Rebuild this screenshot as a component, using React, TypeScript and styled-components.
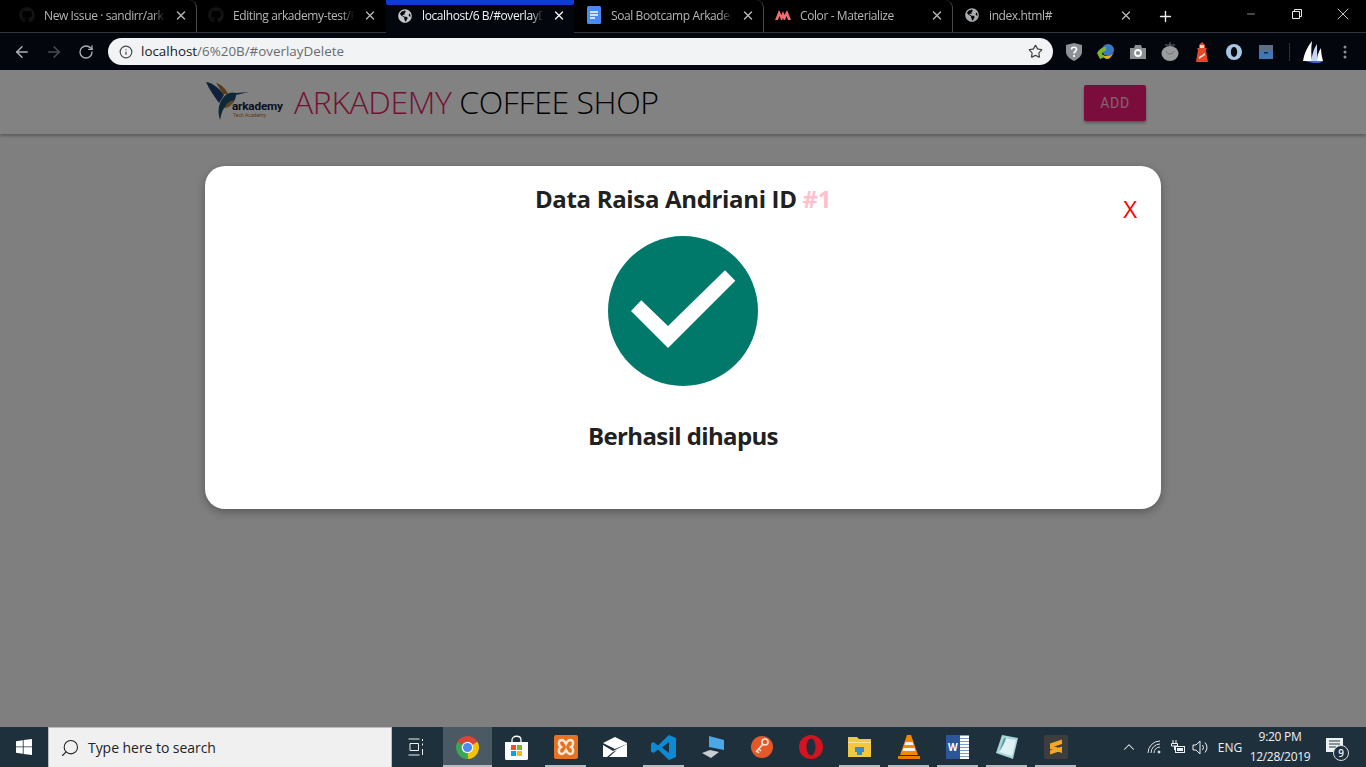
import styled, { createGlobalStyle } from "styled-components";
import { ArrowLeft, ArrowRight, ChevronUp, Info, Minus, Plus, RotateCw, Search, Star, X } from "lucide-react";
import { FaGithub, FaGlobeAmericas } from "react-icons/fa";

const UI_FONT = `"Open Sans", "Noto Sans", sans-serif`;

const GlobalStyle = createGlobalStyle`
  html, body {
    margin: 0;
    padding: 0;
    height: 767px;
    overflow: hidden;
    background: #000;
  }
  * {
    box-sizing: border-box;
  }
`;

const Screen = styled.div`
  display: flex;
  flex-direction: column;
  width: 1366px;
  height: 767px;
  font-family: ${UI_FONT};
`;

/* tab strip */

const TabStrip = styled.div`
  display: flex;
  flex: none;
  height: 33px;
  padding-left: 8px;
  background: #000;
  border-bottom: 1px solid #33363a;
`;

const Tab = styled.div<{ $active?: boolean; $divider?: boolean }>`
  position: relative;
  display: flex;
  align-items: center;
  gap: 9px;
  width: 189px;
  height: ${(p) => (p.$active ? "33px" : "32px")};
  padding: 0 8px 2px 11px;
  background: ${(p) => (p.$active ? "#03060c" : "transparent")};
  border-radius: 8px 8px 0 0;
  color: ${(p) => (p.$active ? "#f1f3f4" : "#b4b6b8")};
  border-right: 1px solid ${(p) => (p.$divider ? "#45484b" : "transparent")};
  background-clip: padding-box;

  &::before {
    content: "";
    display: ${(p) => (p.$active ? "block" : "none")};
    position: absolute;
    top: 0;
    left: 0;
    right: 0;
    height: 5px;
    border-radius: 0 0 2px 2px;
    background: #0d3bd4;
  }
`;

const TabIcon = styled.span`
  display: flex;
  flex: none;
  width: 16px;
  height: 16px;
  align-items: center;
  justify-content: center;
`;

const TabTitle = styled.span`
  flex: 1;
  min-width: 0;
  white-space: nowrap;
  font-size: 12px;
  letter-spacing: -0.4px;
  -webkit-mask-image: linear-gradient(90deg, #000 90%, transparent);
  mask-image: linear-gradient(90deg, #000 90%, transparent);
`;

const TabClose = styled.span`
  display: flex;
  flex: none;
  width: 14px;
  justify-content: center;
`;

const NewTab = styled.span`
  display: flex;
  align-items: center;
  justify-content: center;
  width: 46px;
  color: #e8eaed;
`;

const WindowControls = styled.div`
  display: flex;
  margin-left: auto;
  height: 28px;
`;

const WindowButton = styled.span`
  display: flex;
  width: 46px;
  align-items: center;
  justify-content: center;
  color: #e8e8e8;
`;

/* address bar row */

const Toolbar = styled.div`
  display: flex;
  flex: none;
  align-items: center;
  height: 37px;
  padding-left: 6px;
  background: #03060c;
`;

const NavButton = styled.span<{ $dim?: boolean }>`
  display: flex;
  width: 32px;
  justify-content: center;
  color: ${(p) => (p.$dim ? "#4b4e52" : "#aeb1b4")};
`;

const Omnibox = styled.div`
  display: flex;
  align-items: center;
  gap: 8px;
  width: 945px;
  height: 27px;
  margin-left: 6px;
  padding: 0 10px 0 11px;
  border-radius: 14px;
  background: #f1f3f4;
  color: #45484c;
`;

const Url = styled.span`
  flex: 1;
  padding-bottom: 2px;
  font-size: 13.4px;
  color: #686c70;

  b {
    font-weight: 400;
    color: #202124;
  }
`;

const Extensions = styled.div`
  display: flex;
  align-items: center;
  margin-left: 5px;
`;

const ExtensionSlot = styled.span`
  display: flex;
  width: 32px;
  justify-content: center;
`;

const ToolbarDivider = styled.span`
  width: 1px;
  height: 18px;
  margin: 0 7px;
  background: #2c2f33;
`;

/* web page */

const Page = styled.div`
  position: relative;
  flex: 1;
  min-height: 0;
  background: #fafafa;
`;

const PageHeader = styled.header`
  display: flex;
  align-items: center;
  height: 64px;
  padding: 0 220px 0 205px;
  background: #fff;
  box-shadow: 0 2px 3px rgba(0, 0, 0, 0.3);
`;

const Brand = styled.h1`
  flex: 1;
  margin: 0 0 2px 9px;
  font-size: 32px;
  font-weight: 350;
  letter-spacing: -0.42px;
  color: #000;

  span {
    color: #e91e63;
  }
`;

const AddButton = styled.button`
  width: 62px;
  height: 36px;
  margin-top: 2px;
  padding: 0;
  border: 0;
  border-radius: 2px;
  background: #f01a75;
  box-shadow: 0 2px 3px rgba(0, 0, 0, 0.35);
  color: rgba(255, 255, 255, 0.75);
  font: 400 14px "Roboto", sans-serif;
  letter-spacing: 0.7px;
`;

const Overlay = styled.div`
  position: absolute;
  inset: 0;
  padding: 96px 205px 0;
  background: rgba(0, 0, 0, 0.49);
`;

const Modal = styled.section`
  position: relative;
  display: flex;
  flex-direction: column;
  align-items: center;
  height: 343px;
  padding-top: 17px;
  border-radius: 20px;
  background: #fff;
  box-shadow: 0 3px 10px rgba(0, 0, 0, 0.3);
  color: #212121;
`;

const ModalTitle = styled.h2`
  margin: 0 0 21px;
  font-size: 24px;
  line-height: 32px;
  font-weight: 700;
  letter-spacing: -0.33px;

  span {
    color: #ffc0cb;
  }
`;

const ModalClose = styled.a`
  position: absolute;
  top: 26px;
  right: 24px;
  font-size: 24px;
  line-height: 34px;
  font-weight: 400;
  color: #f00;
`;

const ModalMessage = styled.p`
  margin: 34px 0 0;
  font-size: 24px;
  line-height: 32px;
  font-weight: 700;
  letter-spacing: -0.63px;
`;

/* windows taskbar */

const Taskbar = styled.footer`
  display: flex;
  flex: none;
  align-items: stretch;
  height: 40px;
  background: #1f303d;
  color: #eef1f3;
`;

const StartButton = styled.span`
  display: flex;
  width: 48px;
  align-items: center;
  justify-content: center;
`;

const SearchBox = styled.div`
  display: flex;
  align-items: center;
  gap: 8px;
  width: 344px;
  padding-left: 11px;
  background: #f0f0f0;
  border: 1px solid #b9bdc0;
  border-bottom: 0;
  color: #222;
  font-size: 14px;
  letter-spacing: -0.05px;
`;

const SearchGlyph = styled(Search)`
  transform: scaleX(-1);
`;

const TaskView = styled.span`
  display: flex;
  width: 51px;
  padding-right: 3px;
  align-items: center;
  justify-content: center;
`;

const TaskCell = styled.span<{ $running?: boolean; $active?: boolean }>`
  display: flex;
  width: 49px;
  align-items: center;
  justify-content: center;
  background: ${(p) => (p.$active ? "#4a5963" : "transparent")};
  box-shadow: inset 0 -2px 0 ${(p) => (p.$running ? "#b4bcc2" : "transparent")};
  background-clip: padding-box;
  border-left: 4px solid transparent;
  border-right: 4px solid transparent;
  ${(p) => p.$active && "border: 0;"}
`;

const Tray = styled.div`
  display: flex;
  align-items: center;
  margin-left: auto;
  padding-right: 9px;
`;

const TrayItem = styled.span<{ $width: number }>`
  display: flex;
  width: ${(p) => p.$width}px;
  align-items: center;
  justify-content: center;
  font-size: 12px;
`;

const Clock = styled.span`
  width: 64px;
  font-size: 12px;
  line-height: 20px;
  letter-spacing: -0.3px;
  text-align: center;
`;

const NotificationSlot = styled.span`
  position: relative;
  display: flex;
  width: 45px;
  justify-content: center;
`;

const NotificationCount = styled.span`
  position: absolute;
  top: 7px;
  left: 21px;
  width: 16px;
  height: 16px;
  border: 1px solid #d9dde0;
  border-radius: 50%;
  background: #1f303d;
  font-size: 10px;
  line-height: 14px;
  font-weight: 600;
  text-align: center;
`;

const ArkademyLogo = () => (
  <svg width="80" height="42" viewBox="0 0 80 42">
    <path d="M1 1C8 2 15 8 19 14L14 22C9 15 4 8 1 1Z" fill="#1d3f73" />
    <path d="M11 2C16 3 21 8 23 13L18 13C16 9 13 5 11 2Z" fill="#b0792f" />
    <path d="M15 22C19 13 25 10 31 12L44 11L31 14C31 21 24 26 19 27C17 30 16 34 15 39C13 33 13 27 15 22Z" fill="#1e4f6f" />
    <path d="M19 27C22 22 25 20 29 19C27 24 24 27 19 27Z" fill="#b98a3a" />
    <text x="27" y="29" fontFamily="Roboto, sans-serif" fontSize="11.8" fontWeight="700" letterSpacing="-0.2" fill="#13233f">
      arkademy
    </text>
    <text x="28" y="36" fontFamily="Roboto, sans-serif" fontSize="5" fill="#b5702a">
      Tech Academy
    </text>
  </svg>
);

const SuccessMark = () => (
  <svg width="150" height="150" viewBox="0 0 150 150">
    <circle cx="75" cy="75" r="75" fill="#00796b" />
    <path d="M23 75L33.3 64.3L60 90L117 34.3L127.3 44.7L60 112Z" fill="#fff" />
  </svg>
);

const DocsIcon = () => (
  <svg width="14" height="18" viewBox="0 0 14 18">
    <rect width="14" height="18" rx="1.5" fill="#4a8af4" />
    <path d="M3 6h8M3 9h8M3 12h5" stroke="#fff" strokeWidth="1.4" />
  </svg>
);

const MaterializeIcon = () => (
  <svg width="16" height="10" viewBox="0 0 16 10">
    <path d="M0 10L4 0L6.5 5L8 1L9.5 5L12 0L16 10H13L11.5 6L10 10H8.8L8 8L7.2 10H6L4.5 6L3 10Z" fill="#ee6e73" />
  </svg>
);

const RestoreIcon = () => (
  <svg width="10" height="10" viewBox="0 0 10 10" fill="none" stroke="currentColor">
    <path d="M.5 2.5h7v7h-7zM2.5 2.5v-2h7v7h-2" />
  </svg>
);

const ShieldExt = () => (
  <svg width="16" height="18" viewBox="0 0 16 18">
    <path d="M8 0L16 2V9C16 13 12 16 8 18C4 16 0 13 0 9V2Z" fill="#8e9195" />
    <path d="M5.5 6.5C5.5 3.5 10.5 3.5 10.5 6.5C10.5 8.5 8 8.5 8 10.5M8 12v2" stroke="#fff" strokeWidth="1.7" fill="none" />
  </svg>
);

const IdmExt = () => (
  <svg width="18" height="16" viewBox="0 0 18 16">
    <circle cx="11" cy="6" r="6" fill="#3b78c4" />
    <path d="M0 9C3 4 6 3 9 3L9 7C6 7 5 9 5 10L8 13L3 15Z" fill="#7db52c" />
    <path d="M6 11C9 13 14 12 17 9L13 14C10 16 7 15 6 11Z" fill="#e3b021" />
  </svg>
);

const CameraExt = () => (
  <svg width="16" height="14" viewBox="0 0 16 14">
    <path d="M0 3H4L5 0H11L12 3H16V14H0Z" fill="#8c8f92" />
    <circle cx="8" cy="8" r="3" fill="none" stroke="#fff" strokeWidth="1.8" />
  </svg>
);

const TomatoExt = () => (
  <svg width="18" height="19" viewBox="0 0 18 19">
    <path d="M9 0V5M4 3L14 3" stroke="#66696c" />
    <ellipse cx="9" cy="11.5" rx="8.5" ry="7.5" fill="#999b9d" />
    <path d="M5 9C7 13 11 13 13 9" stroke="#6f7174" fill="none" />
  </svg>
);

const LighthouseExt = () => (
  <svg width="12" height="20" viewBox="0 0 12 20">
    <path d="M3 6V3L6 0L9 3V6H11L10 8L12 20H0L2 8L1 6Z" fill="#e2492a" />
    <rect x="4" y="3" width="4" height="3" fill="#f3d5b5" />
    <path d="M3 15L9 11V13L3 17Z" fill="#f6e6d8" />
  </svg>
);

const RingExt = () => (
  <svg width="16" height="16" viewBox="0 0 16 16">
    <circle cx="8" cy="8" r="8" fill="#a6c6e3" />
    <ellipse cx="8" cy="8" rx="3.2" ry="5" fill="#04070d" />
  </svg>
);

const BoxExt = () => (
  <svg width="14" height="14" viewBox="0 0 14 14">
    <rect width="14" height="14" fill="#3f78b5" />
    <rect width="14" height="6" fill="#5c6f86" />
    <rect x="5" y="7" width="4" height="1.5" fill="#1a2a3f" />
  </svg>
);

const SailsExt = () => (
  <svg width="20" height="22" viewBox="0 0 20 22">
    <path d="M0 20C1 13 4 6 9 0C8 7 8 14 9 20Z" fill="#fff" />
    <path d="M8 21C9 14 11 7 14 3C14 9 14 15 15 21Z" fill="#c6d5f2" />
    <path d="M14 20C14 15 16 10 18 7C18 12 19 16 20 20Z" fill="#fff" />
    <path d="M2 20L10 22H17L20 20Z" fill="#3d63c9" />
  </svg>
);

const WindowsLogo = () => (
  <svg width="16" height="16" viewBox="0 0 16 16" fill="#fff">
    <path d="M0 2.2L6.8 1.2V7.5H0ZM7.6 1.1L16 0V7.5H7.6ZM0 8.3H6.8V14.7L0 13.8ZM7.6 8.3H16V16L7.6 14.9Z" />
  </svg>
);

const TaskViewIcon = () => (
  <svg width="16" height="18" viewBox="0 0 16 18" fill="none" stroke="#eef1f3">
    <path d="M.5 1h11M2 5.5h8.5v7H2zM.5 17h11" />
    <path d="M14.5 1v2M14.5 5.5v2M14.5 11v6" />
  </svg>
);

const ChromeIcon = () => (
  <svg width="23" height="23" viewBox="2 2 20 20">
    <path d="M12 12L3.34 7A10 10 0 0 1 20.66 7Z" fill="#db4437" />
    <path d="M12 12L20.66 7A10 10 0 0 1 12 22Z" fill="#f4c20d" />
    <path d="M12 12L12 22A10 10 0 0 1 3.34 7Z" fill="#3aa757" />
    <circle cx="12" cy="12" r="5" fill="#fff" />
    <circle cx="12" cy="12" r="4" fill="#4c8bf5" />
  </svg>
);

const StoreIcon = () => (
  <svg width="23" height="25" viewBox="0 0 23 25">
    <path d="M7 8V5C7 0 16 0 16 5V8" fill="none" stroke="#fff" strokeWidth="1.3" />
    <path d="M0 7H23V23.5Q23 25 21.5 25H1.5Q0 25 0 23.5Z" fill="#fff" />
    <rect x="6" y="10" width="5" height="5" fill="#f25022" />
    <rect x="12" y="10" width="5" height="5" fill="#7fba00" />
    <rect x="6" y="16" width="5" height="5" fill="#00a4ef" />
    <rect x="12" y="16" width="5" height="5" fill="#ffb900" />
  </svg>
);

const XamppIcon = () => (
  <svg width="24" height="24" viewBox="0 0 24 24">
    <rect width="24" height="24" rx="2" fill="#e8721f" />
    <path d="M8 5C4 5 4 10 7 12C4 14 4 19 8 19C10 19 11 17 12 15C13 17 14 19 16 19C20 19 20 14 17 12C20 10 20 5 16 5C14 5 13 7 12 9C11 7 10 5 8 5Z" fill="none" stroke="#fbe7d8" strokeWidth="2.4" />
  </svg>
);

const MailIcon = () => (
  <svg width="24" height="20" viewBox="0 0 24 20">
    <path d="M0 6L12 0L24 6V7L12 12L0 6Z" fill="#fff" />
    <path d="M0 8L10 14L24 7V20H6L14 13L10 15L4 20H0Z" fill="#fff" />
  </svg>
);

const VsCodeIcon = () => (
  <svg width="25" height="25" viewBox="0 0 25 25">
    <path d="M18 0L25 3V22L18 25L7 14.5L2.5 18L0 16.5V8.5L2.5 7L7 10.5ZM18 7L11 12.5L18 18Z" fill="#0e8ad4" fillRule="evenodd" />
  </svg>
);

const LaptopIcon = () => (
  <svg width="24" height="23" viewBox="0 0 24 23">
    <path d="M8 0L23 4V14L8 11Z" fill="#4aa8e8" />
    <path d="M1 17L9 14L18 16L10 22Z" fill="#c9ced2" />
  </svg>
);

const KeyAppIcon = () => (
  <svg width="24" height="24" viewBox="0 0 24 24">
    <circle cx="12" cy="12" r="11" fill="#e4582a" />
    <circle cx="15" cy="7" r="3" fill="none" stroke="#f6e3d7" strokeWidth="1.6" />
    <path d="M13 9L6 17M9 14L11 16M7 16L9 18" stroke="#f6e3d7" strokeWidth="1.6" />
  </svg>
);

const OperaIcon = () => (
  <svg width="24" height="24" viewBox="0 0 24 24">
    <circle cx="12" cy="12" r="12" fill="#d3131f" />
    <ellipse cx="12" cy="12" rx="4.5" ry="8.5" fill="#1f303d" />
  </svg>
);

const FolderIcon = () => (
  <svg width="23" height="20" viewBox="0 0 23 20">
    <path d="M0 0H9L11 2H23V20H0Z" fill="#f4c645" />
    <path d="M0 5H23V6H0Z" fill="#fbe59a" />
    <path d="M7 10H16V15H14V18H9V15H7Z" fill="#2f8fce" />
  </svg>
);

const VlcIcon = () => (
  <svg width="22" height="24" viewBox="0 0 22 24">
    <path d="M9 0H13L20 20H2Z" fill="#f08a00" />
    <path d="M7.5 7H14.5L15.5 10H6.5ZM5.5 13H16.5L17.5 16H4.5Z" fill="#f5f5f5" />
    <path d="M0 21H22V24H0Z" fill="#e87d00" />
  </svg>
);

const WordTile = styled.span`
  display: flex;
  width: 23px;
  height: 24px;
  align-items: center;
  padding-left: 2px;
  background: linear-gradient(90deg, #2b579a 62%, transparent 62%),
    repeating-linear-gradient(0deg, #fff 0 2px, #7f9cc9 2px 3px);
  color: #fff;
  font-size: 10px;
  font-weight: 700;
`;

const NotepadIcon = () => (
  <svg width="22" height="24" viewBox="0 0 22 24">
    <path d="M6 0L22 3L17 24L0 18Z" fill="#a9d4d8" />
    <path d="M8 3L20 5L16 21L3 17Z" fill="#dff1f2" />
    <path d="M3 17C6 12 9 8 10 3L8 3Z" fill="#4f98a6" />
  </svg>
);

const SublimeIcon = () => (
  <svg width="24" height="24" viewBox="0 0 24 24">
    <rect width="24" height="24" rx="2" fill="#3d3d3d" />
    <path d="M6 8.5L18 4.5V9L6 13ZM6 10L18 14V18L6 14ZM6 15.5L18 11.5V15.5L6 19.5Z" fill="#f5a623" />
  </svg>
);

const WifiIcon = () => (
  <svg width="14" height="14" viewBox="0 0 14 14" fill="none" stroke="#dfe3e6">
    <path d="M1 13A12 12 0 0 1 13 1M4 13A9 9 0 0 1 13 4M7 13A6 6 0 0 1 13 7" />
    <circle cx="12" cy="12" r="1" fill="#dfe3e6" />
  </svg>
);

const BatteryIcon = () => (
  <svg width="16" height="14" viewBox="0 0 16 14" fill="none" stroke="#eef1f3">
    <path d="M3 0V3M6 0V3M1.5 3.5H7.5V6H1.5ZM4.5 6V10" />
    <rect x="5.5" y="6.5" width="9" height="6" fill="#1f303d" />
    <rect x="7" y="8" width="6" height="3" fill="#eef1f3" stroke="none" />
  </svg>
);

const VolumeIcon = () => (
  <svg width="17" height="15" viewBox="0 0 17 15" fill="none" stroke="#eef1f3">
    <path d="M1 5H4L8 1V14L4 10H1Z" />
    <path d="M10.5 5A4 4 0 0 1 10.5 10M13 2.5A8 8 0 0 1 13 12.5" />
  </svg>
);

const NoteIcon = () => (
  <svg width="18" height="18" viewBox="0 0 18 18">
    <path d="M0 0H17V14H0Z" fill="#eef1f3" />
    <path d="M3 3H14M3 6H14M3 9H10" stroke="#1f303d" />
  </svg>
);

const tabs = [
  { title: "New Issue · sandirr/arka", icon: <FaGithub size={16} color="#141414" />, divider: true },
  { title: "Editing arkademy-test/R", icon: <FaGithub size={16} color="#141414" /> },
  { title: "localhost/6 B/#overlayD", icon: <FaGlobeAmericas size={14} color="#c3c6c9" />, active: true },
  { title: "Soal Bootcamp Arkader", icon: <DocsIcon />, divider: true },
  { title: "Color - Materialize", icon: <MaterializeIcon />, divider: true },
  { title: "index.html#", icon: <FaGlobeAmericas size={14} color="#a9acaf" /> },
];

const extensions = [
  { key: "shield", Icon: ShieldExt },
  { key: "idm", Icon: IdmExt },
  { key: "camera", Icon: CameraExt },
  { key: "tomato", Icon: TomatoExt },
  { key: "lighthouse", Icon: LighthouseExt },
  { key: "ring", Icon: RingExt },
  { key: "box", Icon: BoxExt },
];

const apps = [
  { key: "store", icon: <StoreIcon /> },
  { key: "xampp", icon: <XamppIcon />, running: true },
  { key: "mail", icon: <MailIcon /> },
  { key: "vscode", icon: <VsCodeIcon />, running: true },
  { key: "laptop", icon: <LaptopIcon /> },
  { key: "key", icon: <KeyAppIcon /> },
  { key: "opera", icon: <OperaIcon /> },
  { key: "folder", icon: <FolderIcon />, running: true },
  { key: "vlc", icon: <VlcIcon />, running: true },
  { key: "word", icon: <WordTile>W</WordTile>, running: true },
  { key: "notepad", icon: <NotepadIcon />, running: true },
  { key: "sublime", icon: <SublimeIcon />, running: true },
];

const App = () => {
  return (
    <Screen>
      <GlobalStyle />
      <TabStrip>
        {tabs.map((tab) => (
          <Tab key={tab.title} $active={tab.active} $divider={tab.divider}>
            <TabIcon>{tab.icon}</TabIcon>
            <TabTitle>{tab.title}</TabTitle>
            <TabClose>
              <X size={15} strokeWidth={2.4} />
            </TabClose>
          </Tab>
        ))}
        <NewTab>
          <Plus size={17} strokeWidth={2} />
        </NewTab>
        <WindowControls>
          <WindowButton>
            <Minus size={12} strokeWidth={1.2} />
          </WindowButton>
          <WindowButton>
            <RestoreIcon />
          </WindowButton>
          <WindowButton>
            <X size={20} strokeWidth={1} />
          </WindowButton>
        </WindowControls>
      </TabStrip>

      <Toolbar>
        <NavButton>
          <ArrowLeft size={18} />
        </NavButton>
        <NavButton $dim>
          <ArrowRight size={18} />
        </NavButton>
        <NavButton>
          <RotateCw size={16} />
        </NavButton>
        <Omnibox>
          <Info size={14} />
          <Url>
            <b>localhost</b>/6%20B/#overlayDelete
          </Url>
          <Star size={15} />
        </Omnibox>
        <Extensions>
          {extensions.map(({ key, Icon }) => (
            <ExtensionSlot key={key}>
              <Icon />
            </ExtensionSlot>
          ))}
          <ToolbarDivider />
          <ExtensionSlot>
            <SailsExt />
          </ExtensionSlot>
          <ExtensionSlot>
            <svg width="4" height="14" viewBox="0 0 4 14" fill="#8c8f92">
              <circle cx="2" cy="2" r="1.5" />
              <circle cx="2" cy="7" r="1.5" />
              <circle cx="2" cy="12" r="1.5" />
            </svg>
          </ExtensionSlot>
        </Extensions>
      </Toolbar>

      <Page>
        <PageHeader>
          <ArkademyLogo />
          <Brand>
            <span>ARKADEMY</span> COFFEE SHOP
          </Brand>
          <AddButton>ADD</AddButton>
        </PageHeader>
        <Overlay>
          <Modal>
            <ModalTitle>
              Data Raisa Andriani ID <span>#1</span>
            </ModalTitle>
            <ModalClose>X</ModalClose>
            <SuccessMark />
            <ModalMessage>Berhasil dihapus</ModalMessage>
          </Modal>
        </Overlay>
      </Page>

      <Taskbar>
        <StartButton>
          <WindowsLogo />
        </StartButton>
        <SearchBox>
          <SearchGlyph size={20} strokeWidth={1.3} />
          Type here to search
        </SearchBox>
        <TaskView>
          <TaskViewIcon />
        </TaskView>
        <TaskCell $active $running>
          <ChromeIcon />
        </TaskCell>
        {apps.map((app) => (
          <TaskCell key={app.key} $running={app.running}>
            {app.icon}
          </TaskCell>
        ))}
        <Tray>
          <TrayItem $width={26}>
            <ChevronUp size={18} strokeWidth={1.4} />
          </TrayItem>
          <TrayItem $width={24}>
            <WifiIcon />
          </TrayItem>
          <TrayItem $width={23}>
            <BatteryIcon />
          </TrayItem>
          <TrayItem $width={23}>
            <VolumeIcon />
          </TrayItem>
          <TrayItem $width={36}>ENG</TrayItem>
          <Clock>
            9:20 PM
            <br />
            12/28/2019
          </Clock>
          <NotificationSlot>
            <NoteIcon />
            <NotificationCount>9</NotificationCount>
          </NotificationSlot>
        </Tray>
      </Taskbar>
    </Screen>
  );
};

export default App;
